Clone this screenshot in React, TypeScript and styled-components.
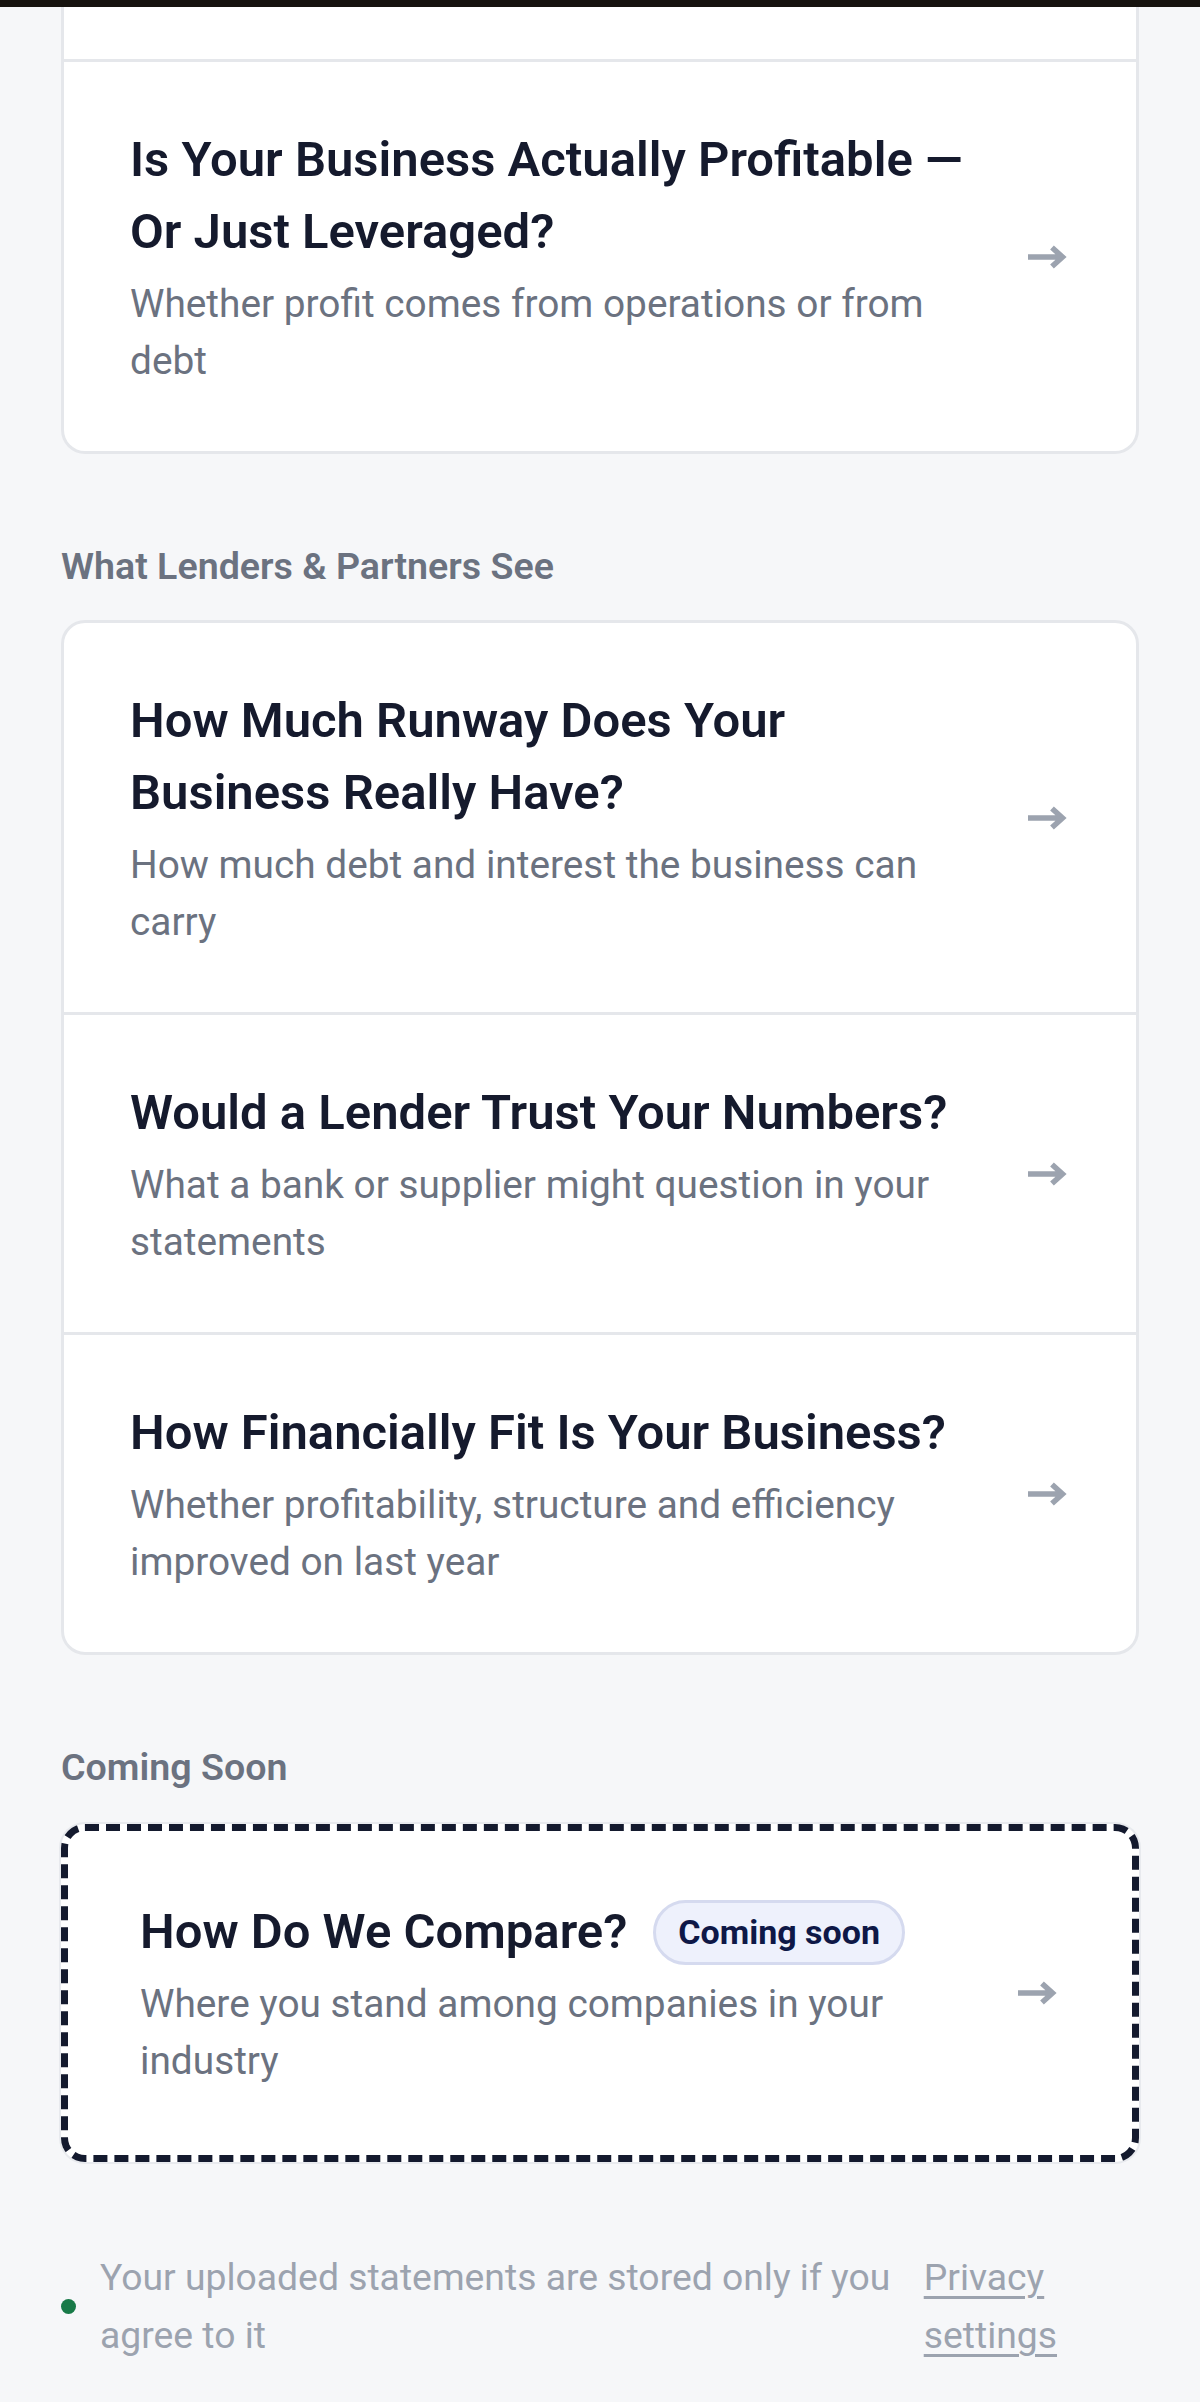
import styled, { createGlobalStyle } from 'styled-components';

const GlobalStyle = createGlobalStyle`
  body {
    margin: 0;
    background: #f6f7f9;
    font-family: Roboto, "Liberation Sans", sans-serif;
  }
`

const TopBar = styled.div`
  height: 7px;
  background: #17130f;
`

const Page = styled.main`
  padding: 0 61px 38px;
`

const Section = styled.section`
  margin-top: 86px;
`

const SectionLabel = styled.h2`
  margin: 0 0 28px;
  font-size: 37.6px;
  line-height: 52px;
  font-weight: 600;
  color: #6b7280;
`

const Card = styled.div<{ $clipped?: boolean }>`
  background: #ffffff;
  border: 3px solid #e5e7eb;
  border-radius: ${p => (p.$clipped ? '0 0 24px 24px' : '24px')};
  border-top-width: ${p => (p.$clipped ? 0 : '3px')};
  overflow: hidden;
`

const CutRow = styled.div`
  height: 52px;
`

const Row = styled.a<{ $divided?: boolean }>`
  display: flex;
  align-items: center;
  gap: 42px;
  padding: 62px 69px 62px 66px;
  border-top: ${p => (p.$divided ? '3px solid #e5e7eb' : 'none')};
  text-decoration: none;
  cursor: pointer;
`

const DashedCard = styled.a`
  display: flex;
  align-items: center;
  gap: 42px;
  margin-top: 31px;
  padding: 65px 75px 66px 72px;
  background: #ffffff;
  border: 7px dashed #141a2e;
  border-radius: 24px;
  box-shadow: 0 0 0 2px #e8eaee;
  text-decoration: none;
`

const Body = styled.div`
  flex: 1;
  min-width: 0;
  display: flex;
  flex-direction: column;
  gap: 7px;
`

const TitleLine = styled.div`
  display: flex;
  align-items: center;
  gap: 26px;
`

const Title = styled.h3`
  margin: 0;
  font-size: 49px;
  line-height: 72px;
  font-weight: 600;
  color: #151a2d;
`

const Subtitle = styled.p`
  margin: 0;
  font-size: 38.8px;
  line-height: 57px;
  color: #6b7280;
`

const Badge = styled.span`
  display: inline-flex;
  align-items: center;
  height: 59px;
  padding: 0 22px;
  border: 3px solid #d5daef;
  border-radius: 999px;
  background: #eef1fc;
  color: #0e1847;
  font-size: 34px;
  font-weight: 700;
`

const Arrow = styled.svg`
  flex: none;
  width: 40px;
  height: 26px;
  color: #9ca3af;
`

const Footer = styled.footer`
  display: flex;
  align-items: center;
  gap: 20px;
  margin-top: 86px;
  padding-right: 82px;
`

const Dot = styled.span`
  flex: none;
  width: 15px;
  height: 15px;
  margin-right: 4px;
  border-radius: 50%;
  background: #187a48;
`

const Note = styled.p`
  flex: 1;
  margin: 0;
  font-size: 37.3px;
  line-height: 58px;
  color: #9ca3af;
`

const PrivacyLink = styled.a`
  width: min-content;
  font-size: 37.3px;
  line-height: 58px;
  color: #9ca3af;
  text-decoration: underline;
  text-decoration-thickness: 3px;
  text-underline-offset: 6px;
`

const ArrowIcon = () => (
  <Arrow viewBox="0 0 40 26" fill="none">
    <path d="M1 13H35M25 3.5L35.5 13L25 22.5" stroke="currentColor" strokeWidth="5.5" />
  </Arrow>
)

type Item = { title: string; text: string }

const lenders: Item[] = [
  { title: 'How Much Runway Does Your Business Really Have?', text: 'How much debt and interest the business can carry' },
  { title: 'Would a Lender Trust Your Numbers?', text: 'What a bank or supplier might question in your statements' },
  { title: 'How Financially Fit Is Your Business?', text: 'Whether profitability, structure and efficiency improved on last year' },
]

const ItemRow = ({ item, divided }: { item: Item; divided?: boolean }) => (
  <Row $divided={divided}>
    <Body>
      <Title>{item.title}</Title>
      <Subtitle>{item.text}</Subtitle>
    </Body>
    <ArrowIcon />
  </Row>
)

const App = () => {
  return (
    <>
      <GlobalStyle />
      <TopBar />
      <Page>
        <Card $clipped>
          <CutRow />
          <ItemRow
            divided
            item={{ title: 'Is Your Business Actually Profitable — Or Just Leveraged?', text: 'Whether profit comes from operations or from debt' }}
          />
        </Card>

        <Section>
          <SectionLabel>What Lenders &amp; Partners See</SectionLabel>
          <Card>
            {lenders.map((item, i) => (
              <ItemRow key={item.title} item={item} divided={i > 0} />
            ))}
          </Card>
        </Section>

        <Section>
          <SectionLabel>Coming Soon</SectionLabel>
          <DashedCard>
            <Body>
              <TitleLine>
                <Title>How Do We Compare?</Title>
                <Badge>Coming soon</Badge>
              </TitleLine>
              <Subtitle>Where you stand among companies in your industry</Subtitle>
            </Body>
            <ArrowIcon />
          </DashedCard>
        </Section>

        <Footer>
          <Dot />
          <Note>Your uploaded statements are stored only if you agree to it</Note>
          <PrivacyLink>Privacy settings</PrivacyLink>
        </Footer>
      </Page>
    </>
  );
};

export default App;
